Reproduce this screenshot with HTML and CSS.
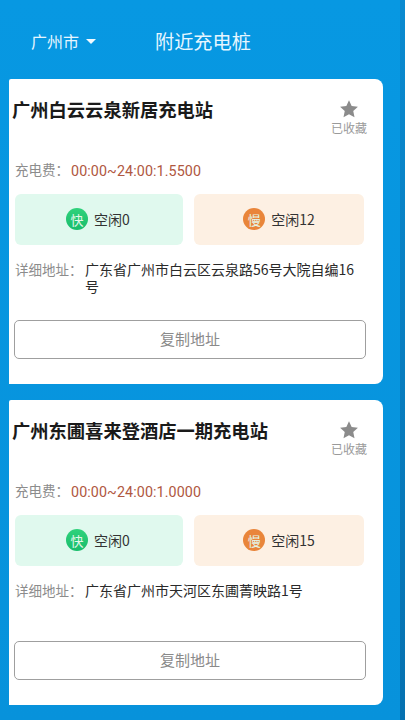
FILE: index.html
```html
<!DOCTYPE html>
<html lang="zh-CN">
<head>
<meta charset="utf-8">
<title>附近充电桩</title>
<link rel="stylesheet" href="styles.css">
</head>
<body>
<div class="app">
  <main class="main">
    <header class="header">
      <div class="city">广州市<span class="caret"></span></div>
      <h1 class="page-title">附近充电桩</h1>
    </header>
    <section class="card">
      <div class="card-head">
        <h2 class="name">广州白云云泉新居充电站</h2>
        <div class="fav">
          <svg class="star" viewBox="0 0 24 24"><path d="M12 1.6l3.2 6.9 7.5.9-5.6 5.1 1.5 7.4L12 18.2l-6.6 3.7 1.5-7.4-5.6-5.1 7.5-.9z"/></svg>
          <span>已收藏</span>
        </div>
      </div>
      <div class="fee"><span class="label">充电费：</span><span class="price">00:00~24:00:1.5500</span></div>
      <div class="tiles">
        <div class="tile fast"><span class="badge">快</span><span>空闲0</span></div>
        <div class="tile slow"><span class="badge">慢</span><span>空闲12</span></div>
      </div>
      <div class="addr"><span class="addr-label">详细地址：</span><span class="addr-text">广东省广州市白云区云泉路56号大院自编16号</span></div>
      <button class="copy">复制地址</button>
    </section>
    <section class="card">
      <div class="card-head">
        <h2 class="name">广州东圃喜来登酒店一期充电站</h2>
        <div class="fav">
          <svg class="star" viewBox="0 0 24 24"><path d="M12 1.6l3.2 6.9 7.5.9-5.6 5.1 1.5 7.4L12 18.2l-6.6 3.7 1.5-7.4-5.6-5.1 7.5-.9z"/></svg>
          <span>已收藏</span>
        </div>
      </div>
      <div class="fee"><span class="label">充电费：</span><span class="price">00:00~24:00:1.0000</span></div>
      <div class="tiles">
        <div class="tile fast"><span class="badge">快</span><span>空闲0</span></div>
        <div class="tile slow"><span class="badge">慢</span><span>空闲15</span></div>
      </div>
      <div class="addr"><span class="addr-label">详细地址：</span><span class="addr-text">广东省广州市天河区东圃菁映路1号</span></div>
      <button class="copy">复制地址</button>
    </section>
  </main>
  <div class="edge"></div>
</div>
</body>
</html>
```
FILE: styles.css
```css
* { box-sizing: border-box; }
html, body { margin: 0; padding: 0; height: 100%; overflow: hidden; }
body { font-family: "Noto Sans CJK SC", "Liberation Sans", Roboto, sans-serif; background: #0795df; }
.app { display: flex; width: 405px; height: 720px; }
.main { width: 400px; background: linear-gradient(#0798e2, #0792db); padding-left: 9px; overflow: hidden; }
.edge { width: 5px; background: linear-gradient(#0a8ad0, #0671b0); }
.header { height: 79px; display: flex; align-items: center; padding: 3px 0 0 22px; color: #e6f6ff; }
.city { width: 124px; font-size: 16px; display: flex; align-items: center; line-height: 20px; }
.caret { margin-left: 7px; margin-top: 1px; border-left: 5px solid transparent; border-right: 5px solid transparent; border-top: 5px solid #f2faff; }
.page-title { margin: 0; font-size: 19.2px; font-weight: 400; line-height: 26px; }
.card { width: 374px; height: 305px; margin-bottom: 16px; background: #fff; border-radius: 2px 8px 8px 0; padding: 0 0 0 5px; }
.card-head { display: flex; justify-content: space-between; height: 72px; padding-top: 18px; }
.name { margin: 0 0 0 -2px; font-size: 18.3px; font-weight: 700; line-height: 24px; color: #1a1a1a; }
.fav { width: 50px; margin-right: 9px; padding-top: 2px; display: flex; flex-direction: column; align-items: center; font-size: 12px; line-height: 16px; color: #9a9a9a; }
.star { width: 20px; height: 20px; fill: #8b8b8b; margin-bottom: 1px; }
.fee { display: flex; align-items: center; height: 38px; font-size: 14px; margin-bottom: 5px; margin-left: 1px; }
.label { width: 56px; color: #8c8c8c; font-size: 13.5px; line-height: 20px; margin-bottom: 3px; }
.price { color: #b0583f; font-family: Roboto, "Noto Sans CJK SC", sans-serif; font-size: 14.3px; letter-spacing: 0.1px; margin-top: 1px; }
.tiles { display: flex; gap: 11px; margin-left: 1px; }
.tile { height: 51px; display: flex; align-items: center; justify-content: center; gap: 6px; padding-bottom: 1px; border-radius: 6px; font-size: 14px; color: #333; }
.fast { width: 168px; background: #e0f9ee; padding-right: 2px; }
.slow { width: 170px; background: #fdf0e3; }
.badge { width: 22px; height: 22px; border-radius: 50%; display: flex; align-items: center; justify-content: center; font-size: 13px; color: #e3f7ea; }
.fast .badge { background: linear-gradient(#30d27c, #18bd6b); }
.slow .badge { background: #e9853a; }
.addr { display: flex; margin: 16px 0 0 1px; height: 59px; font-size: 14px; line-height: 17px; }
.addr-label { width: 70px; flex: none; color: #8c8c8c; font-size: 13.5px; }
.addr-text { width: 272px; color: #2a2a2a; }
.copy { display: block; width: 352px; height: 39px; padding: 0 0 3px; background: #fff; border: 1.5px solid #9f9f9f; border-radius: 5px; font: inherit; font-size: 15px; color: #8a8a8a; }
```
